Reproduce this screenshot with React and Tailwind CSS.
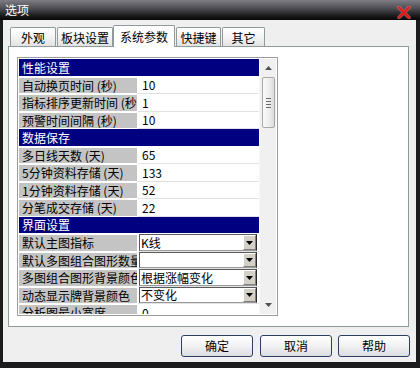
import React from "react";

const rows = [
  { h: "性能设置" },
  { l: "自动换页时间 (秒)", v: "10" },
  { l: "指标排序更新时间 (秒)", v: "1" },
  { l: "预警时间间隔 (秒)", v: "10" },
  { h: "数据保存" },
  { l: "多日线天数 (天)", v: "65" },
  { l: "5分钟资料存储 (天)", v: "133" },
  { l: "1分钟资料存储 (天)", v: "52" },
  { l: "分笔成交存储 (天)", v: "22" },
  { h: "界面设置" },
  { l: "默认主图指标", v: "K线", dd: true },
  { l: "默认多图组合图形数量", v: "", dd: true },
  { l: "多图组合图形背景颜色", v: "根据涨幅变化", dd: true },
  { l: "动态显示牌背景颜色", v: "不变化", dd: true },
  { l: "分析图最小宽度", v: "0" },
];

function Row({ r, i }) {
  const hc = i % 2 === 0 ? "h-[18px]" : "h-[17px]";
  if (r.h) {
    return (
      <div className={`${hc} shrink-0 border-b border-white bg-[#000080] text-white pl-[3px] flex items-center text-[12px] leading-none`}>
        {r.h}
      </div>
    );
  }
  return (
    <div className={`${hc} shrink-0 flex`}>
      <div className="w-[118px] shrink-0 bg-[#c4c4c4] border-y border-white pl-[3px] flex items-center overflow-hidden whitespace-pre text-[12px] leading-none text-black">
        {r.l}
      </div>
      <div className="w-[1px] shrink-0 bg-white" />
      <div className="flex-1 border-b border-[#e2e2e2] bg-white flex items-center text-[12px] leading-none text-black">
        {r.dd ? (
          <div className="ml-[1px] mr-[2px] h-full flex-1 flex border border-t-[#5a5a5a] border-l-[#5a5a5a] border-r-[#2a2a2a] border-b-[#9a9a9a] bg-white">
            <div className="flex-1 pl-[1px] flex items-center overflow-hidden whitespace-nowrap">{r.v}</div>
            <div className="w-[13px] shrink-0 bg-[#d4d0c8] border border-t-white border-l-white border-r-[#808080] border-b-[#808080] flex items-center justify-center">
              <svg width="7" height="4" viewBox="0 0 7 4">
                <path d="M0 0 H7 L3.5 4 Z" fill="#000" />
              </svg>
            </div>
          </div>
        ) : (
          <span className="pl-[4px]">{r.v}</span>
        )}
      </div>
    </div>
  );
}

function Tab({ label, sel, w }) {
  if (sel) {
    return (
      <div className={`${w} h-[22px] shrink-0 relative z-10 bg-white border border-b-0 border-[#919b9c] rounded-t-[2px] flex items-center justify-center text-[12px] leading-none text-black`}>
        {label}
      </div>
    );
  }
  return (
    <div className={`${w} h-[19px] mb-[1px] shrink-0 bg-[linear-gradient(to_bottom,#ffffff,#f4f4f4_50%,#e2e2e2)] border border-b-0 border-[#919b9c] rounded-t-[2px] flex items-center justify-center pt-[1px] text-[12px] leading-none text-black`}>
      {label}
    </div>
  );
}

function Btn({ label, cls }) {
  return (
    <div className={`${cls} w-[72px] h-[22px] rounded-[3px] border border-[#2c3f62] bg-[linear-gradient(to_bottom,#ffffff,#f3f3f5_45%,#dcdce2)] flex items-center justify-center text-[12px] leading-none text-black`}>
      {label}
    </div>
  );
}

export default function App() {
  return (
    <div className="w-[420px] h-[368px] overflow-hidden bg-[#1c1c1e] flex flex-col font-['Noto_Sans_CJK_SC',sans-serif]">
      {/* title bar */}
      <div className="h-[20px] shrink-0 relative bg-[linear-gradient(to_bottom,#7c7c82,#505056_40%,#1c1c1e_78%,#080808)] flex items-center pl-[5px] text-white text-[12px] leading-none">
        选项
        <svg className="absolute left-[397px] top-[6px]" width="14" height="13" viewBox="0 0 14 13">
          <path d="M2 1.5 L12 11.5 M12 1.5 L2 11.5" stroke="#ff9a9a" strokeWidth="3.6" strokeLinecap="round" opacity="0.55" />
          <path d="M2 1.5 L12 11.5 M12 1.5 L2 11.5" stroke="#e01818" strokeWidth="2.4" strokeLinecap="round" />
        </svg>
      </div>
      {/* body */}
      <div className="flex-1 ml-[3px] mr-[4px] mb-[6px] bg-[#efefef] flex flex-col pl-[5px] pt-[5px]">
        <div className="h-[22px] flex items-end pl-[2px] relative z-10">
          <Tab label="外观" w="w-[46px]" />
          <div className="w-[1px] shrink-0" />
          <Tab label="板块设置" w="w-[56px]" />
          <Tab label="系统参数" sel w="w-[62px]" />
          <div className="w-[1px] shrink-0" />
          <Tab label="快捷键" w="w-[45px]" />
          <div className="w-[1px] shrink-0" />
          <Tab label="其它" w="w-[43px]" />
        </div>
        <div className="-mt-[1px] w-[401px] h-[281px] shrink-0 border border-[#919b9c] bg-white pl-[8px] pt-[10px]">
          <div className="w-[261px] h-[259px] border border-[#9c9c9c] p-[1px] flex">
            <div className="w-[240px] h-[255px] overflow-hidden flex flex-col">
              {rows.map((r, i) => (
                <Row key={i} r={r} i={i} />
              ))}
            </div>
            <div className="w-[17px] h-[255px] bg-[#f0f0f0] border-l border-[#f8f8f8] flex flex-col items-center">
              <div className="h-[18px] flex items-center justify-center">
                <svg width="7" height="4" viewBox="0 0 7 4">
                  <path d="M0 4 L3.5 0 L7 4 Z" fill="#505050" />
                </svg>
              </div>
              <div className="w-[13px] h-[51px] rounded-[2px] border border-[#a9a9a9] bg-[linear-gradient(to_right,#fafafa,#ececec_60%,#dcdcdc)] flex flex-col items-center justify-center gap-[2px]">
                <div className="w-[5px] h-[1px] bg-[#6a6a6a]" />
                <div className="w-[5px] h-[1px] bg-[#6a6a6a]" />
                <div className="w-[5px] h-[1px] bg-[#6a6a6a]" />
                <div className="w-[5px] h-[1px] bg-[#6a6a6a]" />
              </div>
              <div className="flex-1" />
              <div className="h-[18px] flex items-center justify-center">
                <svg width="7" height="4" viewBox="0 0 7 4">
                  <path d="M0 0 H7 L3.5 4 Z" fill="#505050" />
                </svg>
              </div>
            </div>
          </div>
        </div>
        <div className="mt-[8px] flex pl-[173px]">
          <Btn label="确定" cls="" />
          <Btn label="取消" cls="ml-[7px]" />
          <Btn label="帮助" cls="ml-[6px]" />
        </div>
      </div>
    </div>
  );
}
